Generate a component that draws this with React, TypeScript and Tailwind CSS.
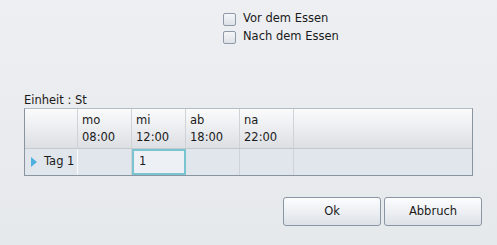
const cols = [
  { day: "mo", time: "08:00", value: "" },
  { day: "mi", time: "12:00", value: "1" },
  { day: "ab", time: "18:00", value: "" },
  { day: "na", time: "22:00", value: "" },
];

function Checkbox({ label }: { label: string }) {
  return (
    <label className="flex items-center gap-[7px] h-[16px]">
      <span className="w-[13px] h-[13px] border border-[#8e9aa8] rounded-[2px] bg-gradient-to-b from-[#f4f6f8] to-[#dde2e8]" />
      <span>{label}</span>
    </label>
  );
}

export default function App() {
  return (
    <div
      className="w-[497px] h-[245px] bg-gradient-to-b from-[#edeff2] to-[#e6e9ec] text-[11.5px] text-[#1a1a1a] flex flex-col"
      style={{ fontFamily: "'DejaVu Sans', Verdana, sans-serif" }}
    >
      {/* Optionen */}
      <div className="pl-[223px] pt-[11px] flex flex-col gap-[2px]">
        <Checkbox label="Vor dem Essen" />
        <Checkbox label="Nach dem Essen" />
      </div>

      {/* Einheit + Tabelle */}
      <div className="pl-[24px] pt-[47px]">
        <div className="h-[16px] leading-[16px]">Einheit : St</div>
        <div className="w-[449px] border border-[#8a949f] border-t-[#b4bcc4] flex flex-col">
          <div className="flex h-[40px] bg-gradient-to-b from-[#fbfbfc] to-[#dcdfe3] border-b border-[#c4c9ce]">
            <div className="w-[53px] border-r border-[#cfd3d8]" />
            {cols.map((c) => (
              <div
                key={c.day}
                className="w-[54px] border-r border-[#cfd3d8] pl-[4px] pt-[3px] leading-[17px]"
              >
                <div>{c.day}</div>
                <div>{c.time}</div>
              </div>
            ))}
            <div className="flex-1" />
          </div>
          <div className="flex h-[26px] bg-[#e1e6ed]">
            <div className="w-[53px] border-r border-[#fafbfc] flex items-center pl-[6px] gap-[7px]">
              <svg width="6" height="10" viewBox="0 0 6 10">
                <path d="M0 0 L6 5 L0 10 Z" fill="#4fb0de" />
              </svg>
              <span>Tag 1</span>
            </div>
            {cols.map((c) =>
              c.value ? (
                <div
                  key={c.day}
                  className="w-[54px] border-2 border-[#7ac3d0] bg-[#edf1f5] flex items-center pl-[5px]"
                >
                  {c.value}
                </div>
              ) : (
                <div key={c.day} className="w-[54px] border-r border-[#cfd3d8]" />
              )
            )}
            <div className="flex-1" />
          </div>
        </div>
      </div>

      {/* Buttons */}
      <div className="pl-[283px] pt-[21px] flex gap-[3px]">
        <button className="w-[98px] h-[29px] rounded-[3px] border border-[#8a96a3] bg-gradient-to-b from-[#fdfdfe] to-[#dde2e8]">
          Ok
        </button>
        <button className="w-[98px] h-[29px] rounded-[3px] border border-[#8a96a3] bg-gradient-to-b from-[#fdfdfe] to-[#dde2e8]">
          Abbruch
        </button>
      </div>
    </div>
  );
}
